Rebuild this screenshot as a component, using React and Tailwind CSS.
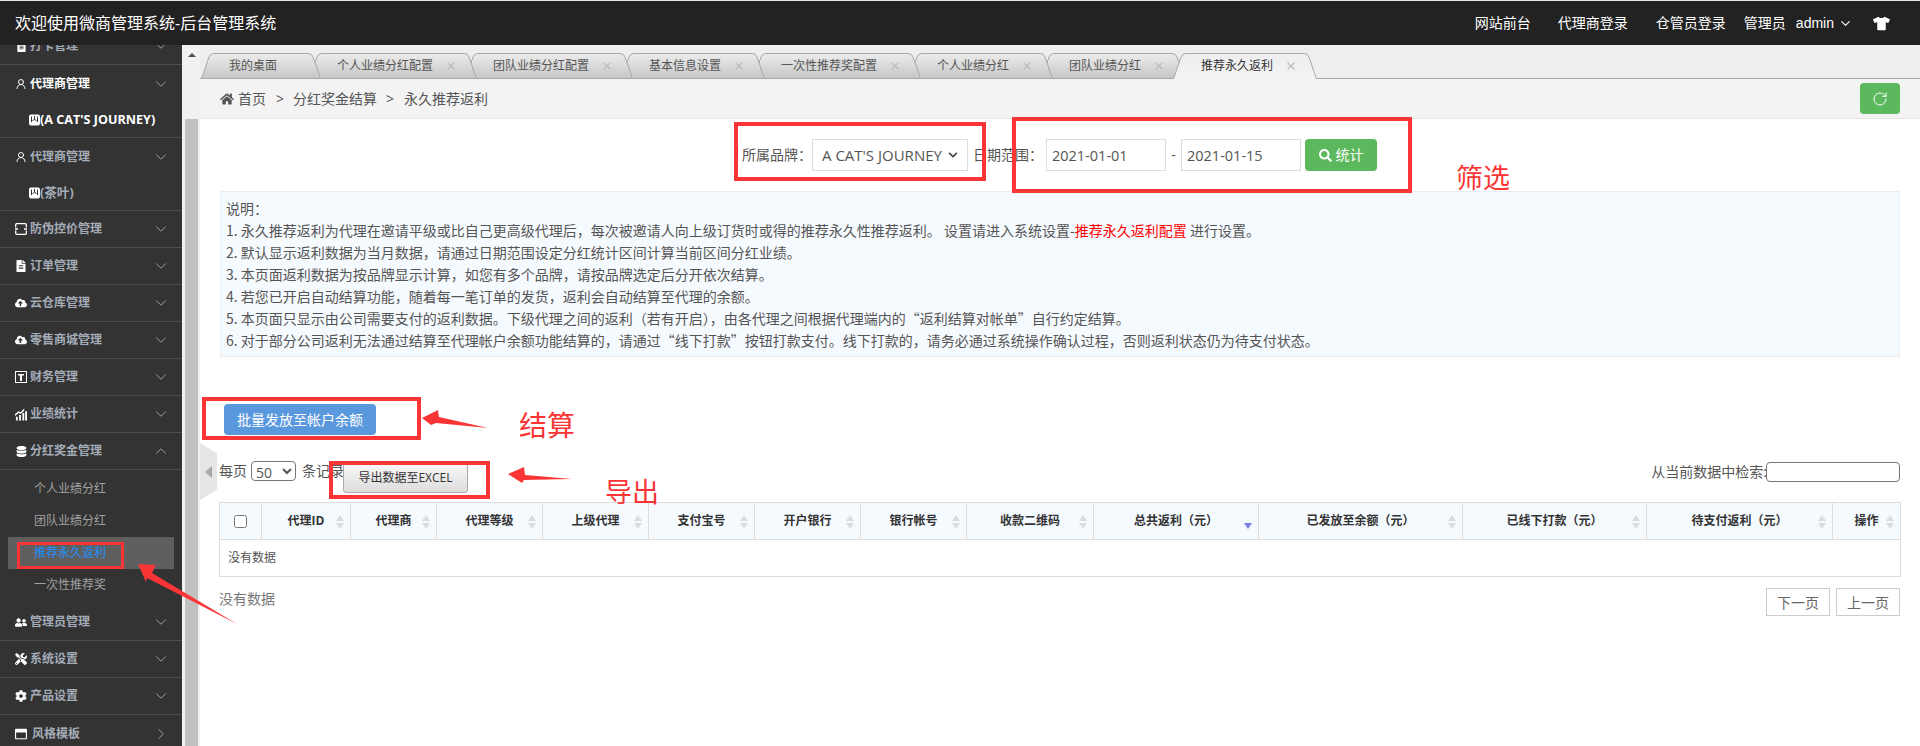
import { ChevronDown, ChevronUp, ChevronRight, UserRound, RotateCw, X } from 'lucide-react';
import {
  FaHome,
  FaSearch,
  FaTshirt,
  FaFileAlt,
  FaCloudUploadAlt,
  FaDatabase,
  FaUserFriends,
  FaTools,
  FaCog,
  FaRegWindowMaximize,
  FaChevronDown,
} from 'react-icons/fa';

const FONT = "font-['Open_Sans','Noto_Sans_CJK_SC',sans-serif]";

const TABS = [
  { label: '我的桌面', width: 48, plain: true },
  { label: '个人业绩分红配置', width: 96 },
  { label: '团队业绩分红配置', width: 96 },
  { label: '基本信息设置', width: 72 },
  { label: '一次性推荐奖配置', width: 96 },
  { label: '个人业绩分红', width: 72 },
  { label: '团队业绩分红', width: 72 },
  { label: '推荐永久返利', width: 72, active: true },
];

const NOTES = [
  '2. 默认显示返利数据为当月数据，请通过日期范围设定分红统计区间计算当前区间分红业绩。',
  '3. 本页面返利数据为按品牌显示计算，如您有多个品牌，请按品牌选定后分开依次结算。',
  '4. 若您已开启自动结算功能，随着每一笔订单的发货，返利会自动结算至代理的余额。',
  '5. 本页面只显示由公司需要支付的返利数据。下级代理之间的返利（若有开启），由各代理之间根据代理端内的“返利结算对帐单”自行约定结算。',
  '6. 对于部分公司返利无法通过结算至代理帐户余额功能结算的，请通过“线下打款”按钮打款支付。线下打款的，请务必通过系统操作确认过程，否则返利状态仍为待支付状态。',
];

const COLUMNS = [
  { label: '代理ID', width: 89 },
  { label: '代理商', width: 86 },
  { label: '代理等级', width: 106 },
  { label: '上级代理', width: 106 },
  { label: '支付宝号', width: 106 },
  { label: '开户银行', width: 106 },
  { label: '银行帐号', width: 106 },
  { label: '收款二维码', width: 127 },
  { label: '总共返利（元）', width: 165, sorted: true },
  { label: '已发放至余额（元）', width: 204 },
  { label: '已线下打款（元）', width: 184 },
  { label: '待支付返利（元）', width: 186 },
  { label: '操作', width: 68 },
];

const BrandIcon = () => (
  <svg width="11" height="12" viewBox="0 0 11 12" className="shrink-0">
    <rect x="0" y="0.5" width="11" height="11" rx="2" fill="#fff" />
    <path d="M2.500 2.500v5.500M8.500 2.500v5.500M5.500 2v3M3.500 7l2-2 2 2" stroke="#333" strokeWidth="1" fill="none" />
  </svg>
);

const ScanIcon = () => (
  <svg width="12" height="12" viewBox="0 0 12 12" fill="none" stroke="#fff" strokeWidth="1.3">
    <path d="M0.700 4.500V1.700a1 1 0 0 1 1-1h8.600a1 1 0 0 1 1 1v2.800M0.700 7.500v2.800a1 1 0 0 0 1 1h8.600a1 1 0 0 0 1-1V7.500M0 6h3M9 6h3" />
  </svg>
);

const FinanceIcon = () => (
  <svg width="12" height="12" viewBox="0 0 12 12">
    <rect x="0.5" y="0.5" width="11" height="11" fill="none" stroke="#fff" />
    <path d="M3 3h6v1.500H7V10H5V4.500H3z" fill="#fff" />
  </svg>
);

const ChartIcon = () => (
  <svg width="13" height="13" viewBox="0 0 13 13" fill="#fff">
    <path d="M1 9h2v4H1zM4.500 7h2v6h-2zM8 5h2v8H8zM11 3h2v10h-2z" />
    <path d="M0 6l4-3 2 1 4-4v2.500L6.200 6 4 5 0 8z" />
  </svg>
);

const MenuRow = ({ icon, label, open, active, last, arrow, labelClass = 'ml-[3px]' }) => {
  const Arrow = arrow === 'right' ? ChevronRight : open ? ChevronUp : ChevronDown;
  return (
    <div className={`flex h-[37px] items-center pl-[15px] pr-[12px] ${last ? '' : 'border-b border-[#4d4d4d]'}`}>
      <span className="flex w-[12px] justify-center text-[12px] text-white">{icon}</span>
      <span className={`${labelClass} text-[12px] font-bold leading-[16px] ${active ? 'text-white' : 'text-[#a4acb8]'}`}>{label}</span>
      <Arrow size={18} strokeWidth={1.3} className="ml-auto text-[#a0a0a0]" />
    </div>
  );
};

const BrandGroup = ({ label, active }) => (
  <div className="border-b border-[#4d4d4d]">
    <MenuRow icon={<UserRound size={14} strokeWidth={2} />} label="代理商管理" active={active} last />
    <div className="flex h-[35px] items-center pl-[29px]">
      <BrandIcon />
      <span className={`text-[12.6px] font-bold leading-[16px] ${active ? 'text-white' : 'text-[#a4acb8]'}`}>{label}</span>
    </div>
  </div>
);

const Sidebar = () => (
  <aside className="h-[701px] w-[182px] shrink-0 overflow-hidden bg-[#333333]">
    <div className="-mt-[17px]">
      <MenuRow icon={<FaFileAlt size={11} />} label="打卡管理" />
      <BrandGroup label="(A CAT'S JOURNEY)" active />
      <BrandGroup label="(茶叶)" />
      <MenuRow icon={<ScanIcon />} label="防伪控价管理" />
      <MenuRow icon={<FaFileAlt size={12} />} label="订单管理" />
      <MenuRow icon={<FaCloudUploadAlt size={14} />} label="云仓库管理" />
      <MenuRow icon={<FaCloudUploadAlt size={14} />} label="零售商城管理" />
      <MenuRow icon={<FinanceIcon />} label="财务管理" />
      <MenuRow icon={<ChartIcon />} label="业绩统计" />
      <MenuRow icon={<FaDatabase size={11} />} label="分红奖金管理" open />
      <div className="py-[3px] text-[12px] leading-[32px] text-[#a0a0a0]">
        <div className="h-[32px] pl-[34px]">个人业绩分红</div>
        <div className="h-[32px] pl-[34px]">团队业绩分红</div>
        <div className="mx-2 h-[32px] bg-[#5f5f5f] pl-[26px] text-[#1e90ff]">推荐永久返利</div>
        <div className="h-[32px] pl-[34px]">一次性推荐奖</div>
      </div>
      <MenuRow icon={<FaUserFriends size={13} />} label="管理员管理" />
      <MenuRow icon={<FaTools size={12} />} label="系统设置" />
      <MenuRow icon={<FaCog size={12} />} label="产品设置" />
      <MenuRow icon={<FaRegWindowMaximize size={12} />} label="风格模板" arrow="right" labelClass="ml-[5px]" last />
    </div>
  </aside>
);

const FakeScrollbar = () => (
  <div className="flex h-[701px] w-[18px] shrink-0 flex-col items-center bg-[#f1f1f1] pl-px">
    <div className="mt-[8px] h-0 w-0 border-x-[4px] border-b-[4px] border-x-transparent border-b-[#505050]" />
    <div className="mt-[62px] w-[13px] flex-1 bg-[#c1c1c1]" />
  </div>
);

const Tab = ({ tab, index }) => {
  const w = tab.width + 72;
  const id = `tab-fill-${index}`;
  return (
    <div
      className={`relative -mb-px -mr-[12px] flex h-[26px] shrink-0 items-center pl-[28px] text-[12px] leading-[16px] ${tab.active ? 'text-[#333]' : 'text-[#555]'}`}
      style={{ width: w, zIndex: tab.active ? 20 : 10 - index }}
    >
      <svg width={w} height="26" className="absolute left-0 top-0">
        <defs>
          <linearGradient id={id} x1="0" y1="0" x2="0" y2="1">
            <stop offset="0" stopColor={tab.active ? '#eeeef0' : '#ececec'} />
            <stop offset="1" stopColor={tab.active ? '#f3f3f3' : '#c6c6c6'} />
          </linearGradient>
        </defs>
        <path
          d={`M0.500 ${tab.active ? 26 : 25.500} L8 4 Q9 0.500 13 0.500 L${w - 13} 0.500 Q${w - 9} 0.500 ${w - 8} 4 L${w - 0.5} ${tab.active ? 26 : 25.500}${tab.active ? '' : ' Z'}`}
          fill={`url(#${id})`}
          stroke="#a8a8a8"
        />
      </svg>
      <span className="relative">{tab.label}</span>
      {!tab.plain && <X size={12} strokeWidth={2.5} className="relative ml-[12px] text-[#bdbdbd]" />}
    </div>
  );
};

const SortArrows = ({ sorted }) => (
  <svg width="8" height="14" viewBox="0 0 8 14" className="absolute right-[6px] top-[12px]">
    {!sorted && <path d="M4 0l4 6H0z" fill="#dcdcdc" />}
    <path d="M0 8h8l-4 6z" fill={sorted ? '#7a7fe0' : '#dcdcdc'} />
  </svg>
);

const Annotations = () => (
  <div className="pointer-events-none absolute inset-0 z-30">
    <div className="absolute left-[734px] top-[122px] h-[59px] w-[252px] border-[4px] border-[#fb3535]" />
    <div className="absolute left-[1012px] top-[117px] h-[76px] w-[400px] border-[4px] border-[#fb3535]" />
    <div className="absolute left-[202px] top-[397px] h-[43px] w-[219px] border-[4px] border-[#fb3535]" />
    <div className="absolute left-[329px] top-[461px] h-[38px] w-[161px] border-[4px] border-[#fb3535]" />
    <div className="absolute left-[17px] top-[542px] h-[27px] w-[107px] border-[3px] border-[#fb3535]" />
    <div className="absolute left-[1456px] top-[160px] text-[27px] leading-[36px] text-[#fb3535]">筛选</div>
    <div className="absolute left-[519px] top-[407px] text-[28px] leading-[36px] text-[#fb3535]">结算</div>
    <div className="absolute left-[605px] top-[474px] text-[27px] leading-[36px] text-[#fb3535]">导出</div>
    <svg width="1920" height="746" className="absolute left-0 top-0">
      <path d="M138 564L156 565 152 573 237 624 147 578 146 582z" fill="#fb3535" />
      <path d="M422 418L438 410 439 417 488 428 436 423 431 425z" fill="#fb3535" />
      <path d="M508 474L524 467 525 475 572 479 524 480 522 483z" fill="#fb3535" />
    </svg>
  </div>
);

export default function App() {
  return (
    <div className={`relative h-[746px] w-[1920px] overflow-hidden bg-white pt-px text-[14px] text-[#555] ${FONT}`}>
      <div className="absolute left-0 top-0 h-px w-full bg-[#e8e8e8]" />

      <header className="flex h-[44px] items-center justify-between bg-[#222222] pl-[15px] pr-[30px] text-white">
        <span className="text-[16px] leading-[22px]">欢迎使用微商管理系统-后台管理系统</span>
        <nav className="flex items-center text-[14px] leading-[20px]">
          <span>网站前台</span>
          <span className="ml-[27px]">代理商登录</span>
          <span className="ml-[28px]">仓管员登录</span>
          <span className="ml-[18px]">管理员</span>
          <span className="ml-[10px] font-['Liberation_Sans',sans-serif]">admin</span>
          <ChevronDown size={15} strokeWidth={1.75} className="ml-[4px]" />
          <FaTshirt size={17} className="ml-[20px]" />
        </nav>
      </header>

      <div className="flex">
        <Sidebar />
        <FakeScrollbar />

        <main className="relative h-[701px] w-[1720px] shrink-0">
          <div className="flex h-[34px] items-end border-b border-[#aaaaaa] bg-[#eeeef0] pl-px">
            {TABS.map((tab, i) => (
              <Tab key={tab.label + i} tab={tab} index={i} />
            ))}
          </div>

          <div className="flex h-[40px] items-center border-b border-[#e5e5e5] bg-[#f3f3f3] pl-[20px] pr-[20px] leading-[20px] text-[#555]">
            <FaHome size={14} />
            <span className="ml-[4px]">首页</span>
            <span className="ml-[10px]">&gt;</span>
            <span className="ml-[9px]">分红奖金结算</span>
            <span className="ml-[9px]">&gt;</span>
            <span className="ml-[10px]">永久推荐返利</span>
            <button className="ml-auto flex h-[31px] w-[40px] items-center justify-center rounded bg-[#5cb85c] text-white">
              <RotateCw size={16} strokeWidth={1.5} />
            </button>
          </div>

          <div className="mt-[20px] flex h-[32px] items-center justify-center pl-[19px] pr-[20px] leading-[20px]">
            <span className="w-[70px] shrink-0">所属品牌：</span>
            <div className="relative h-[32px] w-[156px]">
              <select className="h-full w-full appearance-none border border-[#dddddd] bg-white pl-[9px] text-[15px] text-[#555]">
                <option>A CAT'S JOURNEY</option>
              </select>
              <FaChevronDown size={10} className="absolute right-[10px] top-[11px] text-[#444]" />
            </div>
            <span className="ml-[5px] w-[73px] shrink-0">日期范围：</span>
            <input readOnly value="2021-01-01" className="h-[32px] w-[120px] border border-[#dddddd] px-[5px] text-[14.5px] text-[#555]" />
            <span className="w-[15px] text-center">-</span>
            <input readOnly value="2021-01-15" className="h-[32px] w-[120px] border border-[#dddddd] px-[5px] text-[14.5px] text-[#555]" />
            <button className="ml-[4px] flex h-[32px] w-[72px] items-center justify-center gap-[4px] rounded bg-[#5cb85c] text-white">
              <FaSearch size={13} />
              统计
            </button>
          </div>

          <div className="ml-[20px] mr-[20px] mt-[20px] h-[166px] border border-[#e8eef3] bg-[#f5faff] px-[5px] pt-[5px] font-['Noto_Sans_CJK_SC',sans-serif] leading-[22px] text-[#555]">
            <p>说明：</p>
            <p>
              1. 永久推荐返利为代理在邀请平级或比自己更高级代理后，每次被邀请人向上级订货时或得的推荐永久性推荐返利。 设置请进入系统设置-
              <span className="text-[#ff0000]">推荐永久返利配置</span> 进行设置。
            </p>
            {NOTES.map((note) => (
              <p key={note}>{note}</p>
            ))}
          </div>

          <button className="ml-[24px] mt-[47px] block h-[31px] w-[152px] rounded bg-[#5a98de] text-white">批量发放至帐户余额</button>

          <div className="relative ml-[19px] mr-[20px] mt-[26px] flex h-[41px] items-start">
            <div className="flex h-[20px] items-center leading-[20px]">
              <span>每页</span>
              <select className="ml-[4px] h-[20px] w-[45px] rounded-sm border border-[#767676] bg-white text-[#555]">
                <option>50</option>
              </select>
              <span className="ml-[6px]">条记录</span>
            </div>
            <button className="-ml-px mt-[2px] h-[30px] w-[125px] rounded-[3px] border border-[#aaaaaa] bg-gradient-to-b from-[#f8f8f8] to-[#dddddd] text-[12px] text-[#333]">
              导出数据至EXCEL
            </button>
            <div className="ml-auto flex items-center leading-[20px]">
              <span className="mr-[-1px]">从当前数据中检索:</span>
              <input readOnly className="mt-px h-[20px] w-[134px] rounded-sm border border-[#767676]" />
            </div>
          </div>

          <div className="ml-[19px] mr-[20px]">
            <table className="w-[1681px] table-fixed border-collapse text-[12px] leading-[16px]">
              <colgroup>
                <col className="w-[42px]" />
                {COLUMNS.map((col) => (
                  <col key={col.label} style={{ width: col.width }} />
                ))}
              </colgroup>
              <thead>
                <tr className="h-[37px] bg-[#f5faff] text-[#333]">
                  <th className="border border-[#dddddd]">
                    <input type="checkbox" className="align-middle" />
                  </th>
                  {COLUMNS.map((col) => (
                    <th key={col.label} className="relative border border-[#dddddd] font-bold">
                      {col.label}
                      <SortArrows sorted={col.sorted} />
                    </th>
                  ))}
                </tr>
              </thead>
              <tbody>
                <tr className="h-[37px]">
                  <td colSpan={14} className="border border-[#dddddd] pl-[8px]">没有数据</td>
                </tr>
              </tbody>
            </table>

            <div className="mt-[11px] flex items-start justify-between">
              <span className="leading-[22px] text-[#777]">没有数据</span>
              <div className="flex gap-[6px] text-[#666]">
                <button className="h-[28px] w-[64px] border border-[#cccccc]">下一页</button>
                <button className="h-[28px] w-[64px] border border-[#cccccc]">上一页</button>
              </div>
            </div>
          </div>

          <div className="absolute left-0 top-[398px] flex h-[57px] w-[17px] items-center bg-[#e6e6e6] pl-[5px] [clip-path:polygon(0_0,100%_18%,100%_82%,0_100%)]">
            <div className="h-0 w-0 border-y-[6px] border-r-[7px] border-y-transparent border-r-[#aaaaaa]" />
          </div>
        </main>
      </div>

      <Annotations />
    </div>
  );
}
